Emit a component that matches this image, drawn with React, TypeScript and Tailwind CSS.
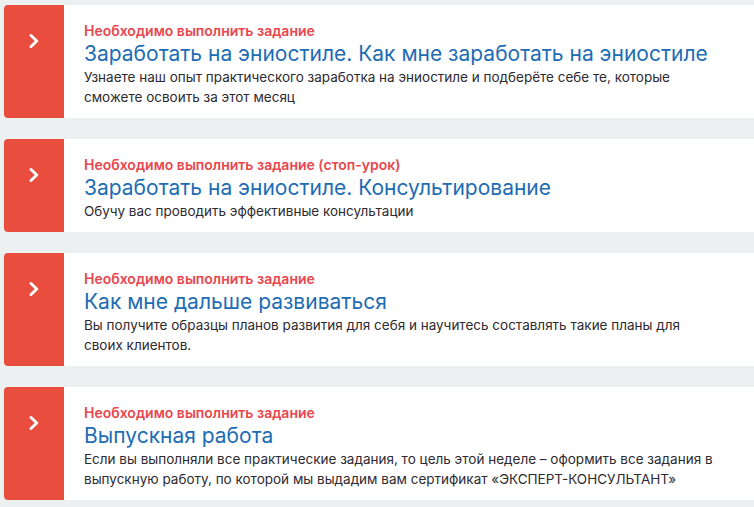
import type { ReactNode } from 'react';

type Lesson = {
  id: number;
  status: string;
  title: string;
  description: ReactNode;
};

const lessons: Lesson[] = [
  {
    id: 1,
    status: 'Необходимо выполнить задание',
    title: 'Заработать на эниостиле. Как мне заработать на эниостиле',
    description:
      'Узнаете наш опыт практического заработка на эниостиле и подберёте себе те, которые сможете освоить за этот месяц',
  },
  {
    id: 2,
    status: 'Необходимо выполнить задание (стоп-урок)',
    title: 'Заработать на эниостиле. Консультирование',
    description: 'Обучу вас проводить эффективные консультации',
  },
  {
    id: 3,
    status: 'Необходимо выполнить задание',
    title: 'Как мне дальше развиваться',
    description:
      'Вы получите образцы планов развития для себя и научитесь составлять такие планы для своих клиентов.',
  },
  {
    id: 4,
    status: 'Необходимо выполнить задание',
    title: 'Выпускная работа',
    description:
      'Если вы выполняли все практические задания, то цель этой неделе – оформить все задания в выпускную работу, по которой мы выдадим вам сертификат «ЭКСПЕРТ-КОНСУЛЬТАНТ»',
  },
];

function Chevron() {
  return (
    <svg className="w-[14px] h-[16px]" viewBox="0 0 14 16" fill="none" stroke="white" strokeWidth={3} strokeLinecap="round" strokeLinejoin="round">
      <path d="M4 2.5 L9.8 8 L4 13.5" />
    </svg>
  );
}

function LessonCard({ lesson }: { lesson: Lesson }) {
  return (
    <div className="flex bg-white rounded-l-[4px] overflow-hidden">
      <div className="w-[60px] shrink-0 bg-[#e84d3e] flex justify-center pt-[28px]">
        <Chevron />
      </div>
      <div className="w-[652px] shrink-0 pl-5 pt-4 pb-[11px]">
        <div className="text-[14px] leading-[20px] font-semibold text-[#e8474d]">{lesson.status}</div>
        <div className="text-[21px] leading-[26px] text-[#1d6cb4]">{lesson.title}</div>
        <p className="text-[13.5px] leading-[20px] text-[#2d2a32]">{lesson.description}</p>
      </div>
    </div>
  );
}

export default function App() {
  return (
    <div className="min-h-screen bg-[#ecf0f1] pl-1 pt-[5px] pb-2" style={{ fontFamily: 'Inter, "Noto Sans", sans-serif' }}>
      <div className="flex flex-col gap-[21px]">
        {lessons.map((l) => (
          <LessonCard key={l.id} lesson={l} />
        ))}
      </div>
    </div>
  );
}
